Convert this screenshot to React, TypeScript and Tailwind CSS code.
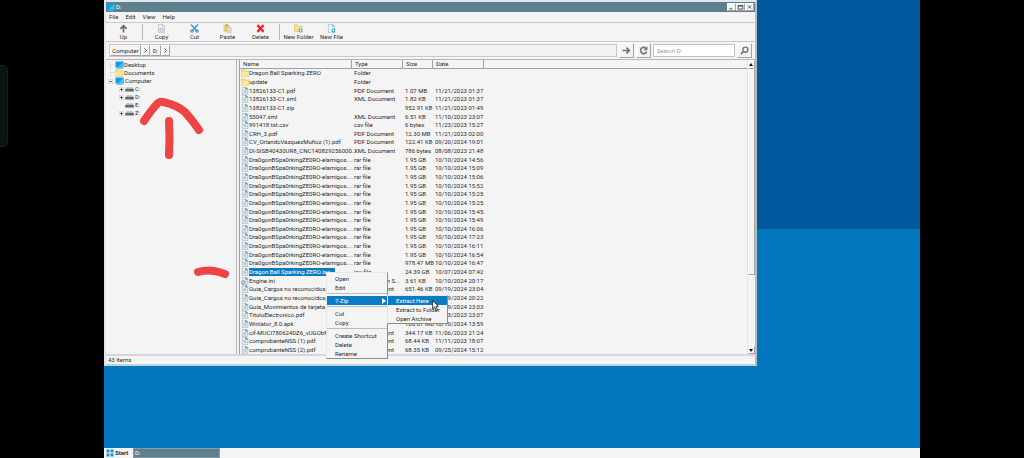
import React from "react";

type FileRow = { name: string; type: string; size: string; date: string; kind?: "folder" | "ini" };

const rar = (time: string, size = "1.95 GB"): FileRow => ({
  name: "Dra0gonBSpa0rkingZE0RO-elamigos....",
  type: "rar file",
  size,
  date: `10/10/2024 ${time}`,
});

const files: FileRow[] = [
  { name: "Dragon Ball Sparking ZERO", type: "Folder", size: "", date: "", kind: "folder" },
  { name: "update", type: "Folder", size: "", date: "", kind: "folder" },
  { name: "13826133-C1.pdf", type: "PDF Document", size: "1.07 MB", date: "11/21/2023 01:37" },
  { name: "13826133-C1.xml", type: "XML Document", size: "1.82 KB", date: "11/21/2023 01:37" },
  { name: "13826133-C1.zip", type: "", size: "952.91 KB", date: "11/21/2023 01:49" },
  { name: "55047.xml", type: "XML Document", size: "6.51 KB", date: "11/10/2023 23:07" },
  { name: "991418.txt.csv", type: "csv file", size: "6 bytes", date: "11/23/2023 15:27" },
  { name: "CRH_3.pdf", type: "PDF Document", size: "12.30 MB", date: "11/21/2023 02:00" },
  { name: "CV_OrlandoVazquezMuñoz (1).pdf", type: "PDF Document", size: "122.41 KB", date: "09/20/2024 19:01" },
  { name: "DI-SISB40430UR8_CNC140829256000...", type: "XML Document", size: "786 bytes", date: "08/08/2023 21:48" },
  rar("14:56"),
  rar("15:09"),
  rar("15:06"),
  rar("15:52"),
  rar("15:25"),
  rar("15:25"),
  rar("15:45"),
  rar("15:49"),
  rar("16:06"),
  rar("17:23"),
  rar("16:11"),
  rar("16:54"),
  rar("16:47", "978.47 MB"),
  { name: "Dragon Ball Sparking ZERO.iso", type: "iso file", size: "24.39 GB", date: "10/07/2024 07:42" },
  { name: "Engine.ini", type: "Configuration S...", size: "3.61 KB", date: "10/10/2024 20:17", kind: "ini" },
  { name: "Guia_Cargos no reconocidos_re...", type: "PDF Document", size: "651.46 KB", date: "09/19/2024 23:04" },
  { name: "Guia_Cargos no reconocidos_re...", type: "PDF Document", size: "651.46 KB", date: "09/19/2024 20:22" },
  { name: "Guia_Movimientos de tarjeta us...", type: "PDF Document", size: "651.46 KB", date: "09/19/2024 23:03" },
  { name: "TituloElectronico.pdf", type: "PDF Document", size: "68.44 KB", date: "10/23/2023 23:07" },
  { name: "Winlator_8.0.apk", type: "apk file", size: "160.07 MB", date: "10/10/2024 13:59" },
  { name: "cif-MUCI780624DZ6_vUGObNa...", type: "PDF Document", size: "344.17 KB", date: "11/06/2023 21:24" },
  { name: "comprobanteNSS (1).pdf", type: "PDF Document", size: "68.44 KB", date: "11/11/2023 18:07" },
  { name: "comprobanteNSS (2).pdf", type: "PDF Document", size: "68.35 KB", date: "09/25/2024 15:12" },
];

const SELECTED = 23;

function FolderIcon() {
  return (
    <svg viewBox="0 0 16 14" className="h-[8px] w-[8px] shrink-0" preserveAspectRatio="none" aria-hidden="true">
      <path d="M0.5 1.5h6l1.5 2h7.5v10h-15z" fill="#f6dc83" stroke="#e3bd52" />
      <path d="M1 5h14v8H1z" fill="#fbe69a" />
    </svg>
  );
}

function FileIcon({ ini = false }: { ini?: boolean }) {
  return (
    <svg viewBox="0 0 16 16" className="h-[8px] w-[8px] shrink-0" aria-hidden="true">
      <path d="M2.5 0.5h7l4 4v11h-11z" fill="#e4eef3" stroke="#8ba0ab" />
      <path d="M9.500 0.500v4h4z" fill="#5d8ba5" stroke="#5d8ba5" />
      <path d="M5 6.500h5M5 9h6M5 11.500h6" stroke="#7fa9c0" />
      {ini && <circle cx="4" cy="11" r="3" fill="#dfe7ea" stroke="#6a7f8a" strokeWidth="1.500" />}
    </svg>
  );
}

function ScreenIcon() {
  return (
    <svg viewBox="0 0 18 16" className="h-[8px] w-[9px] shrink-0" aria-hidden="true">
      <path d="M1 1h16v12H1z" fill="#109ce6" />
      <path d="M17 1v12H5z" fill="#3dbcf5" />
      <path d="M3 14h12v1.500H3z" fill="#6ea9c9" />
    </svg>
  );
}

function DriveIcon() {
  return (
    <svg viewBox="0 0 18 10" className="h-[5px] w-[9px] shrink-0" aria-hidden="true">
      <path d="M3 0.500h12l2.500 4h-17z" fill="#b7bcbc" />
      <path d="M0.500 4h17v5h-17z" fill="#5b6162" />
      <path d="M3 6.500h2M6 6.500h2M9 6.500h2" stroke="#a6acac" />
    </svg>
  );
}

const toolIcons: Record<string, React.ReactNode> = {
  Up: <path d="M8 15V3M2.500 8.500L8 3l5.500 5.500" fill="none" stroke="#6a6a6a" strokeWidth="3" />,
  Copy: (
    <g stroke="#a5a9ab" fill="#f3f5f5">
      <path d="M2.500 0.500h7l4 4v11h-11z" />
      <path d="M9.500 0.500v4h4M5 8h6v5H5z" fill="#dde1e2" />
    </g>
  ),
  Cut: (
    <g fill="none" stroke="#2f97cf">
      <path d="M2 1l9 10M14 1L5 11" strokeWidth="2.500" />
      <circle cx="3.500" cy="12.500" r="2" strokeWidth="2" />
      <circle cx="12.500" cy="12.500" r="2" strokeWidth="2" />
    </g>
  ),
  Paste: (
    <g>
      <path d="M1 2h11v12H1z" fill="#edcc73" />
      <path d="M4 0.500h5v3H4z" fill="#a9a27c" />
      <path d="M6.500 6.500h8v9h-8z" fill="#f3f0df" stroke="#bcae7c" />
      <path d="M8 9h5M8 11h5M8 13h5" stroke="#c3b684" />
    </g>
  ),
  Delete: <path d="M2.500 2l11 12M13.500 2l-11 12" stroke="#e3262b" strokeWidth="4" />,
  "New Folder": (
    <g>
      <path d="M0.500 1.500h5l2 2h7v10h-14z" fill="#f7df8d" stroke="#e2bd55" />
      <circle cx="11.500" cy="11.500" r="3.500" fill="#3fa9dd" />
      <path d="M11.500 9v5M9 11.500h5" stroke="#fff" />
    </g>
  ),
  "New File": (
    <g>
      <path d="M2.500 0.500h7l4 4v11h-11z" fill="#eef6fa" stroke="#7fb4d0" />
      <path d="M9.500 0.500v4h4" fill="#8fc3de" stroke="#7fb4d0" />
      <circle cx="11.500" cy="11.500" r="3.500" fill="#2b9fda" />
      <path d="M11.500 9v5M9 11.500h5" stroke="#fff" />
    </g>
  ),
};

function Tool({ label }: { label: string }) {
  return (
    <button type="button" className="flex w-[33px] flex-col items-center whitespace-nowrap pt-px">
      <svg viewBox="0 0 16 16" className="h-[9px] w-[9px]" aria-hidden="true">
        {toolIcons[label]}
      </svg>
      <span>{label}</span>
    </button>
  );
}

const raised = "border border-t-white border-l-white border-r-[#a3a3a3] border-b-[#a3a3a3] bg-[#f4f4f4]";

function Drive({ name, expandable = true }: { name: string; expandable?: boolean }) {
  return (
    <li className="flex h-[8px] items-center gap-px pl-[13px]">
      <span className="flex h-[5px] w-[5px] items-center justify-center">
        {expandable && (
          <svg viewBox="0 0 10 10" className="h-[5px] w-[5px]" aria-hidden="true">
            <path d="M0.500 0.500h9v9h-9z" fill="#fff" stroke="#b0b0b0" />
            <path d="M2 5h6M5 2v6" stroke="#333" strokeWidth="1.500" />
          </svg>
        )}
      </span>
      <DriveIcon />
      <span>{name}</span>
    </li>
  );
}

function MenuItem({ label, active = false, arrow = false }: { label: string; active?: boolean; arrow?: boolean }) {
  return (
    <button
      type="button"
      role="menuitem"
      className={
        active
          ? "flex h-[9px] w-full items-center justify-between whitespace-nowrap bg-[#0a7cc4] pl-[8px] pr-px text-white"
          : "flex h-[9px] w-full items-center justify-between whitespace-nowrap pl-[8px] pr-px"
      }
    >
      {label}
      {arrow && (
        <svg viewBox="0 0 4 6" className="h-[6px] w-[4px]" aria-hidden="true">
          <path d="M0 0l4 3-4 3z" fill="#fff" />
        </svg>
      )}
    </button>
  );
}

const Separator = () => <div role="separator" className="mt-px mb-[2px] border-t border-[#bdbdbd]" />;

function FileTable() {
  return (
    <table className="flex min-w-0 flex-1 flex-col">
      <thead className="block">
        <tr className="flex h-[9px] items-center border-b border-[#a0a0a0] text-left">
          <th className="h-full w-[112px] border-r border-[#a0a0a0] pl-[3px] font-normal">Name</th>
          <th className="h-full w-[51px] border-r border-[#a0a0a0] pl-[3px] font-normal">Type</th>
          <th className="h-full w-[30px] border-r border-[#a0a0a0] pl-[3px] font-normal">Size</th>
          <th className="h-full w-[51px] border-r border-[#a0a0a0] pl-[3px] font-normal">Date</th>
        </tr>
      </thead>
      <tbody className="flex h-[285px] flex-col">
        {files.map((f, i) => (
          <tr key={i} className="flex min-h-0 flex-1 items-center whitespace-nowrap">
            <td className="flex w-[114px] items-center pl-px">
              {f.kind === "folder" ? <FolderIcon /> : <FileIcon ini={f.kind === "ini"} />}
              <span className={i === SELECTED ? "w-[86px] bg-[#0a7cc4] text-white" : ""}>{f.name}</span>
            </td>
            <td className="w-[51px]">{f.type}</td>
            <td className="w-[29px]">{f.size}</td>
            <td className="pl-px">{f.date}</td>
          </tr>
        ))}
      </tbody>
    </table>
  );
}

export default function App() {
  return (
    <div className="flex min-h-screen bg-black font-[Roboto,sans-serif] text-[6px] leading-[8px] text-[#2b2b2b]">
      <aside className="flex w-[104px] shrink-0 items-start pt-[65px]">
        <div className="h-[82px] w-[8px] rounded-r-[5px] border border-l-0 border-[#16211c] bg-[#0c1410]" />
      </aside>

      <main className="flex min-w-0 flex-1 flex-col justify-between bg-linear-to-b from-[#01579b] from-50% to-[#0277bd] to-50%">
        <section
          aria-label="D:"
          className="relative flex w-4/5 flex-col border-2 border-t-[#dfe8ec] border-l-[#dfe5e8] border-r-[#b3bdc2] border-b-[#c3d3dc] bg-[#f4f4f4]"
        >
          <header className="flex h-[10px] items-center justify-between bg-[#5f7f8e] text-white">
            <div className="flex items-center gap-px">
              <ScreenIcon />
              <h1>D:</h1>
            </div>
            <div className="flex pr-px text-[#333333]">
              {[
                ["Minimize", "M2 8h5"],
                ["Maximize", "M1.500 2.500h8v6h-8zM1.500 3.500h8"],
                ["Close", "M3 2.500l5 5M8 2.500l-5 5"],
              ].map(([label, d]) => (
                <button key={label} type="button" aria-label={label} className={`h-[8px] w-[9px] ${raised}`}>
                  <svg viewBox="0 0 11 10" className="h-[6px] w-[7px]" aria-hidden="true">
                    <path d={d} fill="none" stroke="#444" strokeWidth="1.500" />
                  </svg>
                </button>
              ))}
            </div>
          </header>

          <nav className="flex h-[11px] items-center gap-[7px] border-b border-[#c9c9c9] pl-[3px]">
            <button type="button">File</button>
            <button type="button">Edit</button>
            <button type="button">View</button>
            <button type="button">Help</button>
          </nav>

          <div className="flex h-[19px] items-stretch border-b border-[#c9c9c9] pl-px">
            <Tool label="Up" />
            <div className="mx-[2px] my-px border-l border-[#b9b9b9]" />
            <Tool label="Copy" />
            <Tool label="Cut" />
            <Tool label="Paste" />
            <Tool label="Delete" />
            <div className="mx-[2px] my-px border-l border-[#b9b9b9]" />
            <Tool label="New Folder" />
            <Tool label="New File" />
          </div>

          <div className="flex h-[18px] items-center gap-[2px] border-b border-[#b5b5b5] px-[3px]">
            <div className="flex h-[13px] flex-1 border border-[#c9c9c9] bg-[#f2f2f2]">
              <button type="button" className={`w-[31px] ${raised}`}>Computer</button>
              <button type="button" aria-label="Computer folders" className={`flex w-[9px] items-center justify-center ${raised}`}>
                <Chevron />
              </button>
              <button type="button" className={`w-[11px] ${raised}`}>D:</button>
              <button type="button" aria-label="D: folders" className={`flex w-[9px] items-center justify-center ${raised}`}>
                <Chevron />
              </button>
            </div>
            <button type="button" aria-label="Go" className={`flex h-[15px] w-[15px] items-center justify-center ${raised}`}>
              <svg viewBox="0 0 16 16" className="h-[9px] w-[9px]" aria-hidden="true">
                <path d="M1 8h12M8 3l5 5-5 5" fill="none" stroke="#707070" strokeWidth="3" />
              </svg>
            </button>
            <button type="button" aria-label="Refresh" className={`flex h-[15px] w-[15px] items-center justify-center ${raised}`}>
              <svg viewBox="0 0 16 16" className="h-[9px] w-[9px]" aria-hidden="true">
                <path d="M12.500 4.500A5.500 5.500 0 1 0 13.500 10" fill="none" stroke="#777" strokeWidth="3" />
                <path d="M15 0.500v7H8z" fill="#777" />
              </svg>
            </button>
            <input
              type="text"
              aria-label="Search D:"
              placeholder="Search D:"
              className="h-[13px] w-[82px] border border-[#c2c2c2] bg-white px-[3px] placeholder:text-[#9a9a9a] placeholder:opacity-100"
            />
            <button type="button" aria-label="Search" className={`flex h-[15px] w-[15px] items-center justify-center ${raised}`}>
              <svg viewBox="0 0 16 16" className="h-[9px] w-[9px]" aria-hidden="true">
                <circle cx="9.500" cy="6.500" r="4.500" fill="none" stroke="#777" strokeWidth="2.500" />
                <path d="M6 10l-4.500 4.500" stroke="#777" strokeWidth="3" />
              </svg>
            </button>
          </div>

          <div className="flex border-b-2 border-[#d5d8db]">
            <ul className="relative w-[131px] shrink-0 border-r border-[#b5b5b5] pt-px">
              <li className="flex h-[8px] items-center pl-[9px]">
                <ScreenIcon />
                <span>Desktop</span>
              </li>
              <li className="flex h-[8px] items-center gap-px pl-[9px]">
                <FolderIcon />
                <span>Documents</span>
              </li>
              <li className="flex h-[8px] items-center gap-px pl-[2px]">
                <svg viewBox="0 0 12 10" className="h-[5px] w-[6px]" aria-hidden="true">
                  <path d="M0.500 0.500h9v9h-9z" fill="#fff" stroke="#b0b0b0" />
                  <path d="M2 5h6" stroke="#333" strokeWidth="1.500" />
                </svg>
                <ScreenIcon />
                <span>Computer</span>
              </li>
              <Drive name="C:" />
              <Drive name="D:" />
              <Drive name="E:" expandable={false} />
              <Drive name="Z:" />
              <svg viewBox="0 0 8 24" className="absolute left-[2px] top-0 h-[24px] w-[8px]" aria-hidden="true">
                <path d="M2.500 2v15M2.500 4.500h4M2.500 12.500h4" stroke="#d0d0d0" strokeDasharray="1 1" fill="none" />
              </svg>
            </ul>
            <div className="ml-[2px] flex min-w-0 flex-1 border-l border-[#a0a0a0]">
              <FileTable />
              <div className="flex w-[8px] shrink-0 flex-col border-l border-[#e4e4e4]">
                <button type="button" aria-label="Scroll up" className={`flex h-[9px] items-center justify-center ${raised}`}>
                  <svg viewBox="0 0 4 3" className="h-[3px] w-[4px]" aria-hidden="true"><path d="M0 3l2-3 2 3z" fill="#111" /></svg>
                </button>
                <div className={`h-[206px] ${raised}`} />
                <div className="flex-1" />
                <button type="button" aria-label="Scroll down" className={`flex h-[8px] items-center justify-center ${raised}`}>
                  <svg viewBox="0 0 4 3" className="h-[3px] w-[4px]" aria-hidden="true"><path d="M0 0l2 3 2-3z" fill="#111" /></svg>
                </button>
              </div>
            </div>
          </div>

          <footer className="h-[8px] pl-[2px]">43 Items</footer>

          <div
            role="menu"
            aria-label="File actions"
            className="absolute left-[220px] top-[270px] w-[62px] border border-t-[#e6e6e6] border-l-[#e6e6e6] border-r-[#8c8c8c] border-b-[#8c8c8c] bg-[#f4f4f4] pt-px"
          >
            <MenuItem label="Open" />
            <MenuItem label="Edit" />
            <Separator />
            <MenuItem label="7-Zip" active arrow />
            <Separator />
            <MenuItem label="Cut" />
            <MenuItem label="Copy" />
            <Separator />
            <MenuItem label="Create Shortcut" />
            <MenuItem label="Delete" />
            <MenuItem label="Rename" />
          </div>

          <div
            role="menu"
            aria-label="7-Zip"
            className="absolute left-[281px] top-[293px] w-[61px] border border-t-[#e6e6e6] border-l-[#e6e6e6] border-r-[#8c8c8c] border-b-[#8c8c8c] bg-[#f4f4f4]"
          >
            <MenuItem label="Extract Here" active />
            <MenuItem label="Extract to Folder" />
            <MenuItem label="Open Archive" />
          </div>

          <svg viewBox="0 0 12 19" className="absolute left-[326px] top-[298px] h-[11px] w-[7px]" aria-hidden="true">
            <path d="M1 1v14l3.500-3 2.500 6 2.500-1-2.500-6H11z" fill="#fff" stroke="#222" strokeWidth="1.500" />
          </svg>

          <svg
            viewBox="0 0 130 190"
            className="pointer-events-none absolute left-0 top-[90px] h-[190px] w-[130px]"
            aria-hidden="true"
          >
            <g fill="none" stroke="#ef4444" strokeLinecap="round" strokeLinejoin="round">
              <path d="M38 29Q46 17 52 11Q54 9 57 10Q71 13 79 20Q87 29 93 38" strokeWidth="8" />
              <path d="M63 29Q64 46 63 63" strokeWidth="8" />
              <path d="M92 180Q104 176 119 182" strokeWidth="8" />
            </g>
          </svg>
        </section>

        <footer className="flex h-[10px] bg-[#f4f4f4]">
          <button type="button" className="flex w-[28px] items-center gap-px pl-[2px] font-bold">
            <svg viewBox="0 0 16 16" className="h-[8px] w-[8px]" aria-hidden="true">
              <path d="M1 1h6v6H1zM9 1h6v6H9zM1 9h6v6H1zM9 9h6v6H9z" fill="#1795d8" />
            </svg>
            Start
          </button>
          <button type="button" className="ml-px w-[87px] border border-[#8a9da6] bg-[#5f7f8e] pl-px text-left text-white">
            D:
          </button>
        </footer>
      </main>

      <aside className="w-[104px] shrink-0" />
    </div>
  );
}

function Chevron() {
  return (
    <svg viewBox="0 0 6 10" className="h-[5px] w-[3px]" aria-hidden="true">
      <path d="M1 1l4 4-4 4" fill="none" stroke="#555" strokeWidth="2" />
    </svg>
  );
}
